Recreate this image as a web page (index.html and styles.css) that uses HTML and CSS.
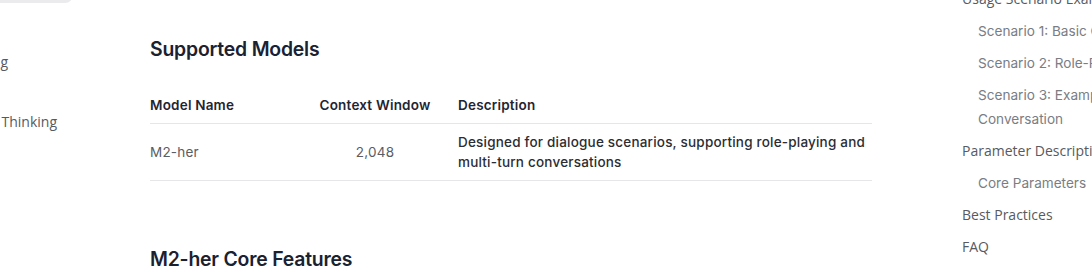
FILE: index.html
```html
<!DOCTYPE html>
<html lang="en">
<head>
  <meta charset="UTF-8">
  <meta name="viewport" content="width=device-width, initial-scale=1.0">
  <title>M2-her</title>
  <link rel="stylesheet" href="styles.css">
</head>
<body>
  <div class="page">
    <aside class="sidebar">
      <div class="search-box"></div>
      <ul class="side-nav">
        <li class="side-item side-item-a"><span>Function Calling</span></li>
        <li class="side-item side-item-b"><span>Interleaved Thinking</span></li>
      </ul>
    </aside>

    <main class="content">
      <h2>Supported Models</h2>
      <table class="model-table">
        <thead>
          <tr>
            <th class="col-name">Model Name</th>
            <th class="col-context">Context Window</th>
            <th class="col-desc">Description</th>
          </tr>
        </thead>
        <tbody>
          <tr>
            <td class="col-name">M2-her</td>
            <td class="col-context">2,048</td>
            <td class="col-desc">Designed for dialogue scenarios, supporting role-playing and multi-turn conversations</td>
          </tr>
        </tbody>
      </table>

      <h2 class="section-gap">M2-her Core Features</h2>
    </main>

    <nav class="toc">
      <ul>
        <li class="toc-item">Usage Scenario Examples</li>
        <li class="toc-item toc-sub">Scenario 1: Basic Conversation</li>
        <li class="toc-item toc-sub">Scenario 2: Role-Playing</li>
        <li class="toc-item toc-sub">Scenario 3: Example Multi-turn Conversation</li>
        <li class="toc-item">Parameter Description</li>
        <li class="toc-item toc-sub">Core Parameters</li>
        <li class="toc-item">Best Practices</li>
        <li class="toc-item">FAQ</li>
      </ul>
    </nav>
  </div>
</body>
</html>
```

FILE: styles.css
```css
body {
  margin: 0;
  padding: 0;
  background: #ffffff;
  font-family: Inter, "Noto Sans", sans-serif;
  color: #1f2430;
  overflow: hidden;
}
.page {
  display: flex;
  width: 1300px;
  height: 272px;
}
ul {
  list-style: none;
  margin: 0;
  padding: 0;
}

/* left navigation, mostly scrolled out of view */
.sidebar {
  width: 150px;
  flex-shrink: 0;
  overflow: hidden;
}
.search-box {
  width: 73px;
  height: 40px;
  margin-top: -37px;
  background: #ebebed;
  border-radius: 0 8px 8px 0;
}
.side-nav {
  margin-top: 44px;
  display: flex;
  flex-direction: column;
  gap: 30px;
  font-family: "Open Sans", sans-serif;
  font-size: 14px;
  color: #555a62;
}
.side-item {
  display: flex;
  justify-content: flex-end;
  height: 30px;
  line-height: 30px;
  white-space: nowrap;
}
.side-item-a {
  width: 8px;
}
.side-item-b {
  width: 57px;
}

/* main article */
.content {
  width: 722px;
  flex-shrink: 0;
}
h2 {
  margin: 35px 0 24px;
  font-size: 19.4px;
  line-height: 28px;
  font-weight: 600;
  color: #1a2131;
  letter-spacing: -0.2px;
}
h2.section-gap {
  margin-top: 64px;
}
.model-table {
  width: 100%;
  border-collapse: collapse;
  font-size: 13.5px;
  line-height: 20px;
  letter-spacing: 0.2px;
}
.model-table th,
.model-table td {
  padding: 8px;
  text-align: left;
  border-bottom: 1px solid #e6e6e8;
  vertical-align: middle;
}
.model-table th {
  font-weight: 600;
  color: #1f2533;
}
.model-table .col-name {
  width: 142px;
  padding-left: 0;
}
.model-table .col-context {
  width: 134px;
  text-align: center;
}
.model-table .col-desc {
  padding-right: 2px;
}
.model-table td.col-name,
.model-table td.col-context {
  color: #5a5d63;
  font-weight: 400;
}
.model-table td.col-desc {
  color: #2a2d33;
  font-weight: 500;
}

/* table of contents on the right */
.toc {
  width: 240px;
  margin-left: 89px;
  flex-shrink: 0;
}
.toc ul {
  margin-top: -13px;
  display: flex;
  flex-direction: column;
  gap: 8px;
}
.toc-item {
  padding-left: 1px;
  font-family: "Open Sans", sans-serif;
  font-size: 14px;
  line-height: 24px;
  color: #575a60;
}
.toc-sub {
  padding-left: 17px;
  font-family: Inter, sans-serif;
  font-size: 13.6px;
  color: #7a7d83;
}
```
